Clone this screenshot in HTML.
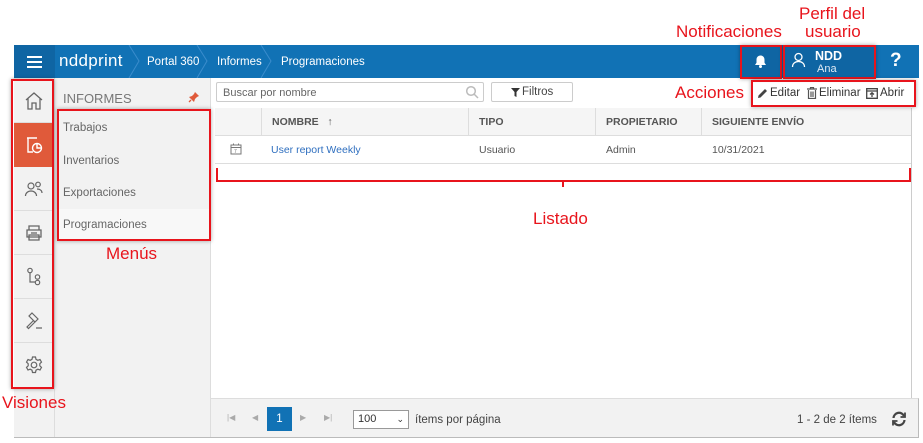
<!DOCTYPE html>
<html><head><meta charset="utf-8"><style>
*{box-sizing:border-box;margin:0;padding:0}
body{width:923px;height:443px;background:#fff;font-family:"Liberation Sans",sans-serif;position:relative;overflow:hidden;font-size:11px;color:#444}
.a{position:absolute}
.red{position:absolute;border:2px solid #e8141c;box-shadow:0 0 4px rgba(0,0,0,.35);z-index:5}
.lbl{position:absolute;color:#e8141c;font-size:17px;white-space:nowrap;z-index:10}
.hdr{left:14px;top:45px;width:905px;height:33px;background:#1172b5}
.ic{position:absolute;left:14px;width:40px;height:44px;border-bottom:1px solid #ddd;display:flex;align-items:center;justify-content:center}
.th{position:absolute;top:108px;height:28px;line-height:28px;font-weight:bold;color:#555;font-size:10.5px;border-left:1px solid #ddd;padding-left:10px}
.td{position:absolute;top:136px;height:28px;line-height:28px;color:#555;font-size:10.5px;padding-left:10px}
.mi{position:absolute;left:56px;width:154px;height:32px;line-height:32px;padding-left:7px;color:#666;font-size:11.5px}
</style></head><body>
<!-- header -->
<div class="a hdr"></div>
<div class="a" style="left:14px;top:45px;width:41px;height:33px;background:#0f65a3"></div>
<div class="a" style="left:27px;top:56px;width:15px;height:2px;background:#fff;box-shadow:0 5px 0 #fff,0 10px 0 #fff"></div>
<div class="a" style="left:59px;top:51px;color:#fff;font-size:17px;letter-spacing:.3px">nddprint</div>
<svg class="a" style="left:125px;top:45px" width="220" height="33"><g fill="none" stroke="#3a8ccc" stroke-width="1"><path d="M4 0 L14 16 L4 33"/><path d="M72 0 L82 16 L72 33"/><path d="M136 0 L146 16 L136 33"/></g></svg>
<div class="a" style="left:147px;top:56px;color:#fff;font-size:11.5px">Portal 360</div>
<div class="a" style="left:217px;top:56px;color:#fff;font-size:11.5px">Informes</div>
<div class="a" style="left:281px;top:56px;color:#fff;font-size:11.5px">Programaciones</div>
<div class="a" style="left:742px;top:46px;width:39px;height:31px;background:#0f65a3"></div>
<svg class="a" style="left:753px;top:54px" width="15" height="15" viewBox="0 0 15 15"><path d="M7.5 1.5c-2.5 0-4 1.8-4 4.2v3L2 11h11l-1.5-2.3v-3c0-2.4-1.5-4.2-4-4.2z" fill="#fff"/><circle cx="7.5" cy="12.5" r="1.5" fill="#fff"/></svg>
<div class="a" style="left:785px;top:46px;width:90px;height:31px;background:#0f65a3"></div>
<svg class="a" style="left:791px;top:52px" width="15" height="16" viewBox="0 0 15 16"><circle cx="7.5" cy="5" r="3.5" fill="none" stroke="#fff" stroke-width="1.3"/><path d="M1.5 15c0-3.5 2.7-5.5 6-5.5s6 2 6 5.5" fill="none" stroke="#fff" stroke-width="1.3"/></svg>
<div class="a" style="left:815px;top:49px;color:#fff;font-weight:bold;font-size:12.5px">NDD</div>
<div class="a" style="left:817px;top:63px;color:#dfeaf5;font-size:11px">Ana</div>
<div class="a" style="left:890px;top:50px;color:#fff;font-weight:bold;font-size:19px">?</div>
<div class="red" style="left:740px;top:45px;width:42px;height:34px"></div>
<div class="red" style="left:783px;top:45px;width:93px;height:34px"></div>
<div class="lbl" style="left:676px;top:22px">Notificaciones</div>
<div class="lbl" style="left:799px;top:4px">Perfil del</div>
<div class="lbl" style="left:805px;top:22px">usuario</div>
<!-- left icon bar -->
<div class="a" style="left:14px;top:78px;width:41px;height:360px;background:#f2f2f2;border-right:1px solid #ddd"></div>
<div class="ic" style="top:79px"><svg width="20" height="20" viewBox="0 0 20 20" fill="none" stroke="#666" stroke-width="1.3"><path d="M2 9 L10 2 L18 9 M4 7.5 V18 H8 V12 H12 V18 H16 V7.5"/></svg></div>
<div class="ic" style="top:123px;background:#e05a3a;border:none"><svg width="20" height="20" viewBox="0 0 20 20" fill="none" stroke="#fff" stroke-width="1.4"><path d="M3 3 H13 M4 3 V17 H9"/><circle cx="13" cy="13" r="4.5"/><path d="M13 8.5 V13 H17.5"/></svg></div>
<div class="ic" style="top:167px"><svg width="20" height="18" viewBox="0 0 20 18" fill="none" stroke="#666" stroke-width="1.2"><circle cx="7" cy="6" r="3"/><path d="M1.5 16c0-3 2.5-5 5.5-5s5.5 2 5.5 5"/><circle cx="14" cy="4.5" r="2.3"/><path d="M13 9c3 0 5 1.5 5 4"/></svg></div>
<div class="ic" style="top:211px"><svg width="20" height="20" viewBox="0 0 20 20" fill="none" stroke="#666" stroke-width="1.3"><path d="M5 7 V3 H15 V7 M3 7 H17 V14 H3 Z M5 12 V17 H15 V12 Z M7 10 H13"/></svg></div>
<div class="ic" style="top:255px"><svg width="18" height="20" viewBox="0 0 18 20" fill="none" stroke="#666" stroke-width="1.2"><circle cx="5" cy="3.5" r="2.2"/><path d="M5 6 V15 H10"/><circle cx="12.5" cy="10" r="2.2"/><circle cx="12.5" cy="15.5" r="2.2"/></svg></div>
<div class="ic" style="top:299px"><svg width="20" height="20" viewBox="0 0 20 20" fill="none" stroke="#666" stroke-width="1.2"><path d="M8 2 L14 8 L11 11 L5 5 Z M9.5 9.5 L3 16 L4.5 17.5 L11 11 M12 17 H18"/></svg></div>
<div class="ic" style="top:343px;border:none"><svg width="20" height="20" viewBox="0 0 20 20" fill="none" stroke="#666" stroke-width="1.2"><circle cx="10" cy="10" r="2.8"/><path d="M8.5 2h3l.5 2.3 1.8 1 2.2-.8 1.5 2.6-1.7 1.6v2.1l1.7 1.6-1.5 2.6-2.2-.8-1.8 1-.5 2.3h-3l-.5-2.3-1.8-1-2.2.8-1.5-2.6 1.7-1.6V8.7L2.5 7.1 4 4.5l2.2.8 1.8-1z"/></svg></div>
<div class="red" style="left:11px;top:79px;width:43px;height:310px"></div>
<div class="lbl" style="left:2px;top:393px">Visiones</div>
<!-- menu panel -->
<div class="a" style="left:55px;top:78px;width:156px;height:360px;background:#f2f2f2;border-right:1px solid #ddd"></div>
<div class="a" style="left:63px;top:91px;color:#777;font-size:13px">INFORMES</div>
<svg class="a" style="left:188px;top:91px" width="12" height="12" viewBox="0 0 12 12"><path d="M7 1 L11 5 L9 6 L7 8 L6 11 L1 6 L4 5 L6 3 Z" fill="#e05a3a"/><path d="M3 9 L1 11" stroke="#e05a3a" stroke-width="1.3"/></svg>
<div class="mi" style="top:112px">Trabajos</div>
<div class="mi" style="top:145px">Inventarios</div>
<div class="mi" style="top:177px">Exportaciones</div>
<div class="mi" style="top:209px;background:#f8f8f8">Programaciones</div>
<div class="red" style="left:57px;top:109px;width:154px;height:132px"></div>
<div class="lbl" style="left:106px;top:244px">Menús</div>
<!-- toolbar -->
<div class="a" style="left:216px;top:82px;width:268px;height:20px;border:1px solid #ccc;border-radius:2px;background:#fff"></div>
<div class="a" style="left:223px;top:87px;color:#666;font-size:11px">Buscar por nombre</div>
<svg class="a" style="left:465px;top:85px" width="14" height="14" viewBox="0 0 14 14" fill="none" stroke="#bbb" stroke-width="1.5"><circle cx="6" cy="6" r="4.3"/><path d="M9 9 L13 13"/></svg>
<div class="a" style="left:491px;top:82px;width:82px;height:20px;border:1px solid #ccc;border-radius:2px;background:#fff"></div>
<svg class="a" style="left:511px;top:88px" width="9" height="9" viewBox="0 0 9 9"><path d="M0 0 H9 L5.5 4 V9 L3.5 8 V4 Z" fill="#333"/></svg>
<div class="a" style="left:522px;top:86px;color:#444;font-size:11.5px">Filtros</div>
<div class="lbl" style="left:675px;top:83px">Acciones</div>
<svg class="a" style="left:757px;top:88px" width="11" height="11" viewBox="0 0 11 11"><path d="M1 10 L1.5 7.5 L8 1 L10 3 L3.5 9.5 Z" fill="#444"/></svg>
<div class="a" style="left:770px;top:87px;color:#333;font-size:11.5px">Editar</div>
<svg class="a" style="left:807px;top:87px" width="10" height="12" viewBox="0 0 10 12"><path d="M0 2 H10 M3.5 2 V0.5 H6.5 V2 M1.5 3 V11.5 H8.5 V3 M4 4.5 V10 M6 4.5 V10" fill="none" stroke="#555" stroke-width="1.2"/></svg>
<div class="a" style="left:819px;top:87px;color:#333;font-size:11.5px">Eliminar</div>
<svg class="a" style="left:866px;top:88px" width="12" height="11" viewBox="0 0 12 11"><path d="M0.7 0.7 H11.3 V10.3 H0.7 Z M0.7 3 H11.3 M6 9 V5 M4 6.5 L6 4.7 L8 6.5" fill="none" stroke="#444" stroke-width="1.3"/></svg>
<div class="a" style="left:880px;top:87px;color:#333;font-size:11.5px">Abrir</div>
<div class="red" style="left:751px;top:80px;width:165px;height:27px"></div>
<!-- table -->
<div class="a" style="left:215px;top:108px;width:696px;height:28px;background:#f5f5f5;border-bottom:1px solid #ddd"></div>
<div class="th" style="left:261px;width:207px">NOMBRE &nbsp; <span style="font-weight:normal">↑</span></div>
<div class="th" style="left:468px;width:127px">TIPO</div>
<div class="th" style="left:595px;width:106px">PROPIETARIO</div>
<div class="th" style="left:701px;width:210px">SIGUIENTE ENVÍO</div>
<div class="a" style="left:215px;top:163px;width:696px;height:1px;background:#ddd"></div>
<svg class="a" style="left:230px;top:143px" width="12" height="12" viewBox="0 0 12 12"><path d="M1 2 H11 V11 H1 Z M1 4.5 H11 M3.5 0.5 V2.5 M8.5 0.5 V2.5" fill="none" stroke="#777" stroke-width="1"/><text x="4" y="10" font-size="5" fill="#777" font-family="Liberation Sans">7</text></svg>
<div class="td" style="left:261px;color:#2f6fbf">User report Weekly</div>
<div class="td" style="left:469px">Usuario</div>
<div class="td" style="left:596px">Admin</div>
<div class="td" style="left:702px">10/31/2021</div>
<div class="a" style="left:911px;top:108px;width:1px;height:290px;background:#ccc"></div>
<!-- Listado bracket -->
<svg class="a" style="left:214px;top:165px;z-index:5" width="700" height="24"><path d="M3 3 V16 H696 V3 M349 16 V22" fill="none" stroke="#e8141c" stroke-width="2"/></svg>
<div class="lbl" style="left:533px;top:209px">Listado</div>
<!-- pager -->
<div class="a" style="left:211px;top:398px;width:708px;height:40px;background:#f2f2f2;border-top:1px solid #ddd;border-bottom:1px solid #bbb;border-right:1px solid #bbb"></div>
<div class="a" style="left:14px;top:437px;width:197px;height:1px;background:#bbb"></div>
<div class="a" style="left:227px;top:413px;color:#aaa;font-size:8px">|◀</div>
<div class="a" style="left:252px;top:413px;color:#aaa;font-size:8px">◀</div>
<div class="a" style="left:267px;top:407px;width:25px;height:24px;background:#1172b5;color:#fff;text-align:center;line-height:24px;font-size:11.5px">1</div>
<div class="a" style="left:300px;top:413px;color:#aaa;font-size:8px">▶</div>
<div class="a" style="left:324px;top:413px;color:#aaa;font-size:8px">▶|</div>
<div class="a" style="left:353px;top:410px;width:56px;height:19px;border:1px solid #999;background:#fff;padding-left:4px;line-height:17px;color:#333;font-size:11px">100<span style="position:absolute;right:4px;font-size:9px">⌄</span></div>
<div class="a" style="left:415px;top:414px;color:#444;font-size:11.5px">ítems por página</div>
<div class="a" style="left:797px;top:414px;color:#444;font-size:11.5px">1 - 2 de 2 ítems</div>
<svg class="a" style="left:891px;top:411px" width="16" height="16" viewBox="0 0 16 16" fill="none" stroke="#444" stroke-width="2.2"><path d="M2.5 7 A5.5 5.5 0 0 1 13 5"/><path d="M13.5 9 A5.5 5.5 0 0 1 3 11"/><path d="M14 1.5 V6 H9.5" stroke-width="1.8"/><path d="M2 14.5 V10 H6.5" stroke-width="1.8"/></svg>
</body></html>
